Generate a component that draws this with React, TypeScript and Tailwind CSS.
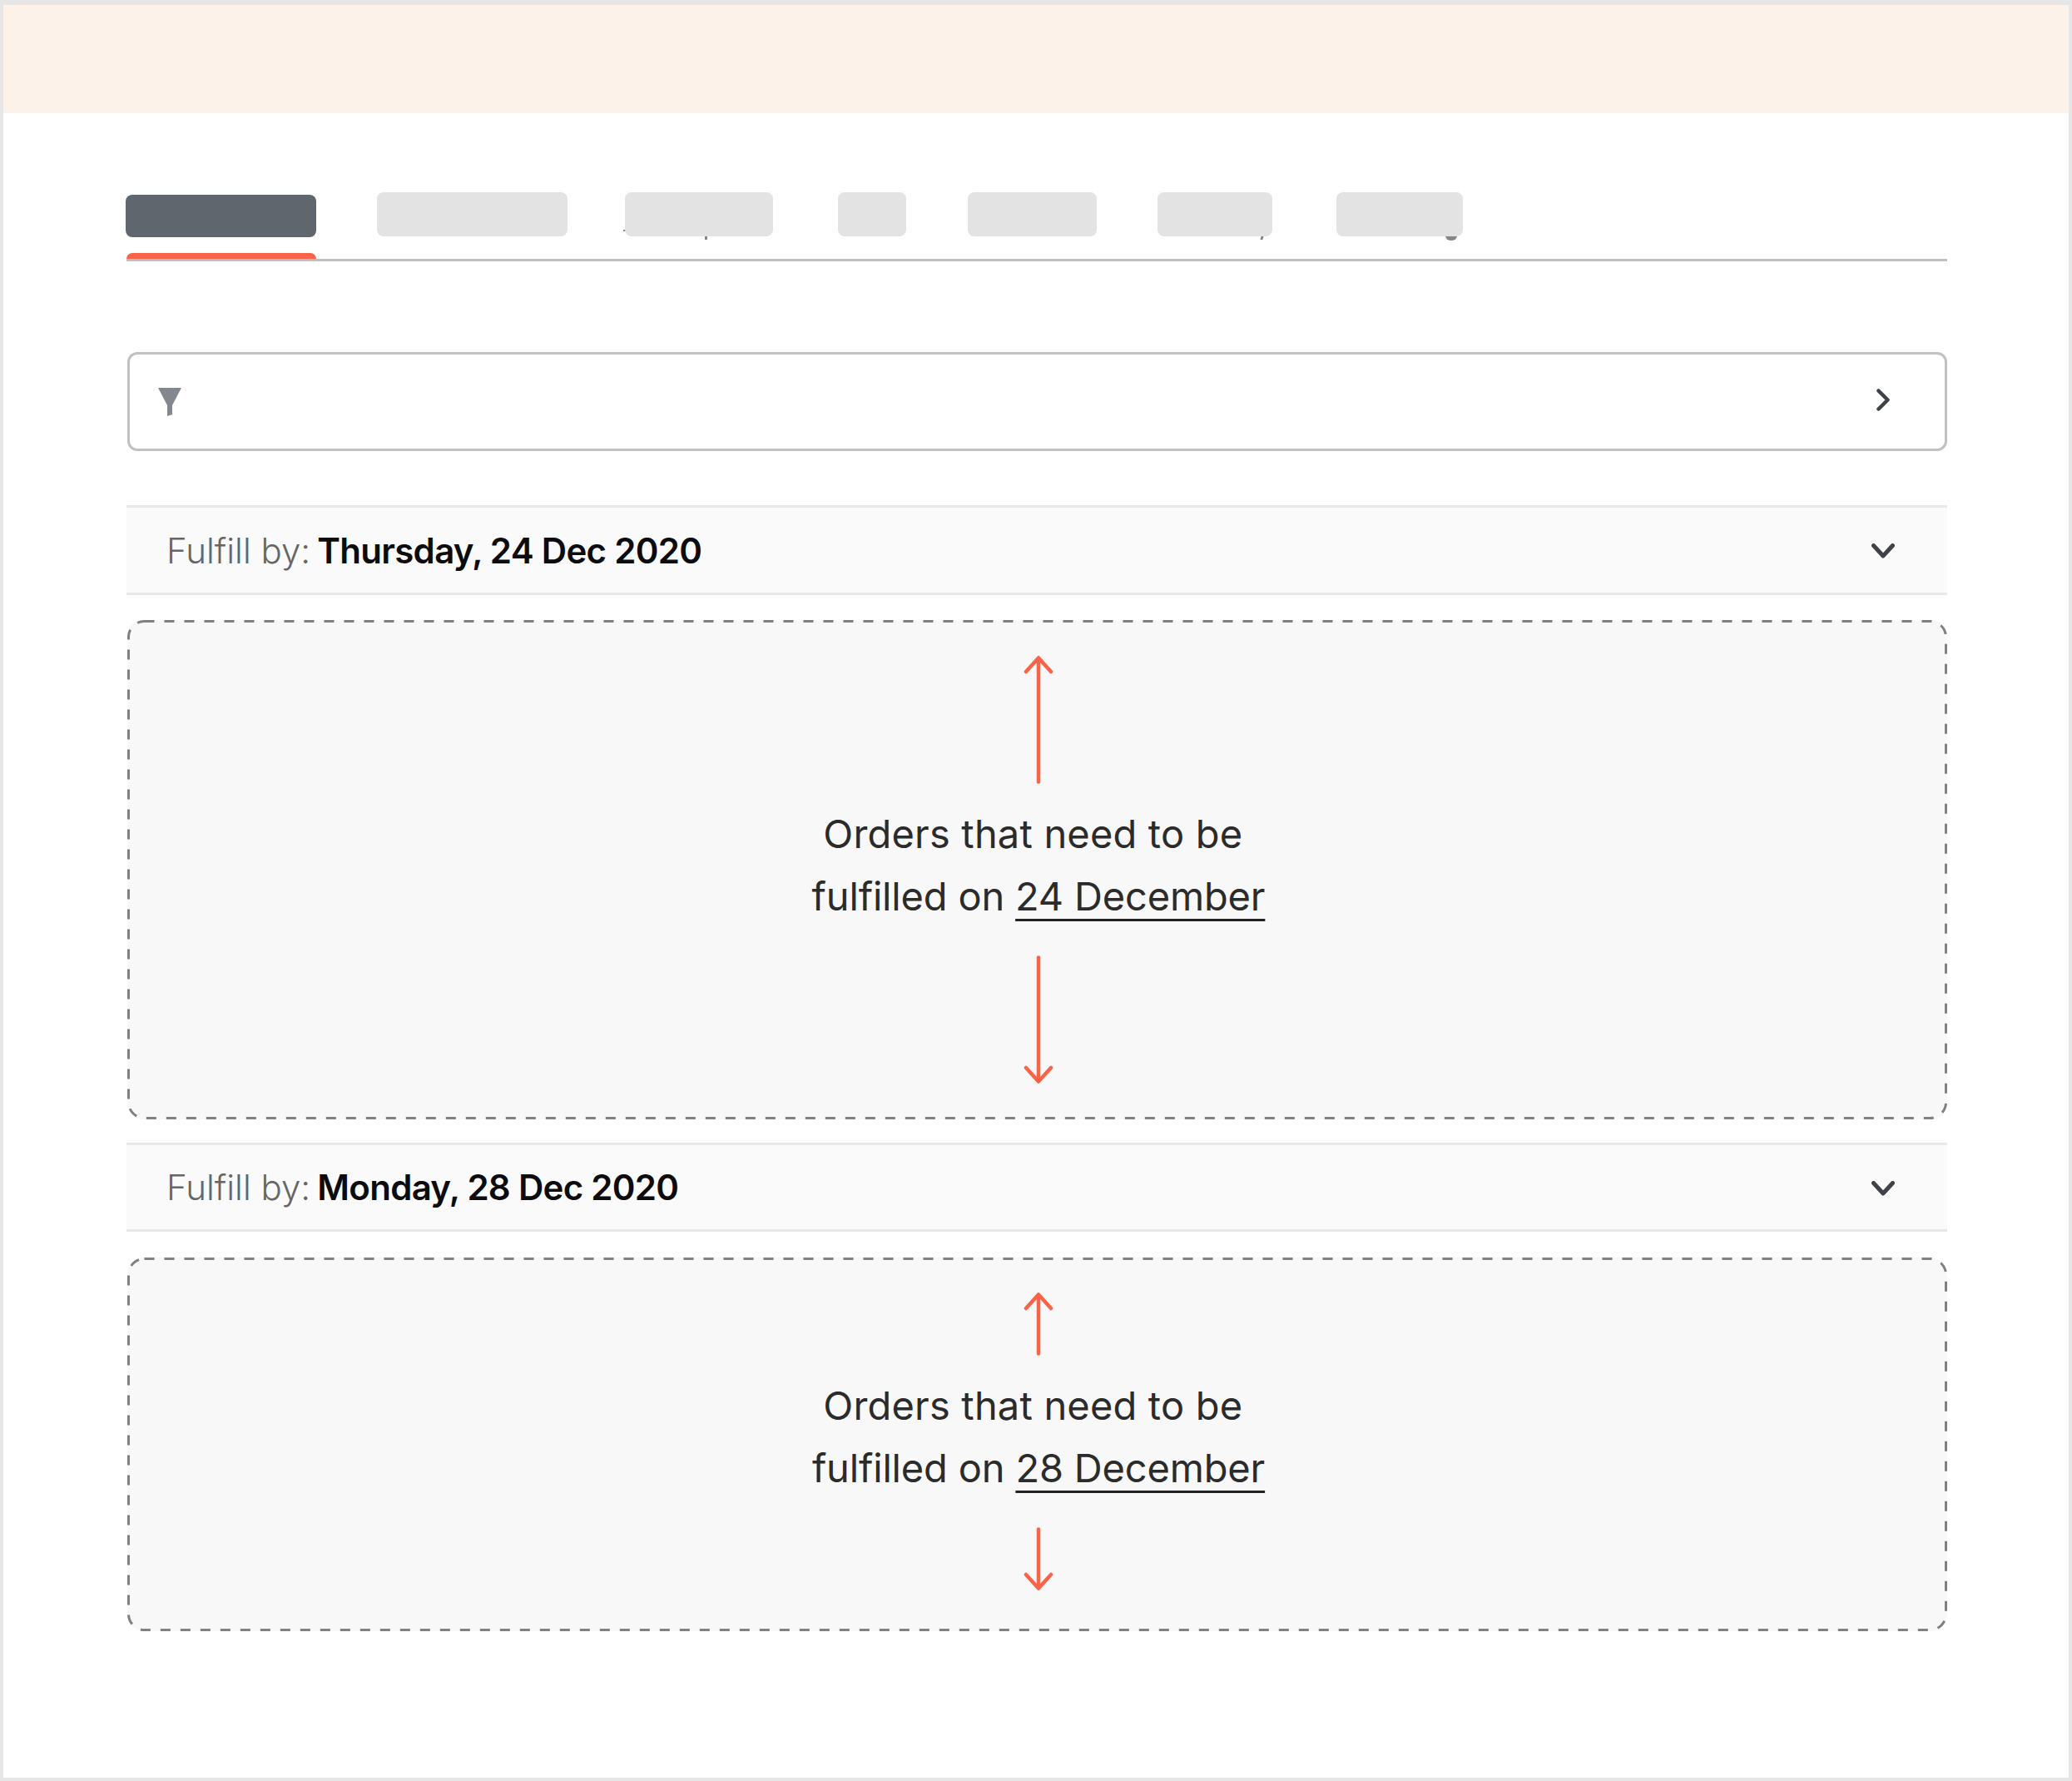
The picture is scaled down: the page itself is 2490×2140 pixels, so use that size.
import type { ReactNode } from 'react';

const tabs = [
  { id: 'a', className: 'ml-[73px] w-[229px]', mark: null },
  {
    id: 'b',
    className: 'ml-[69px] w-[178px]',
    mark: (
      <>
        <span className="absolute left-[-2px] top-[45px] h-[2px] w-[3px] bg-[#85878e]" />
        <span className="absolute left-[96px] top-[53px] h-[4px] w-[3px] bg-[#85878e]" />
      </>
    ),
  },
  { id: 'c', className: 'ml-[78px] w-[82px]', mark: null },
  { id: 'd', className: 'ml-[74px] w-[155px]', mark: null },
  {
    id: 'e',
    className: 'ml-[73px] w-[138px]',
    mark: <span className="absolute left-[124px] top-[53px] h-[4px] w-[3px] skew-x-[-15deg] bg-[#85878e]" />,
  },
  {
    id: 'f',
    className: 'ml-[77px] w-[152px]',
    mark: <span className="absolute left-[131px] top-[52px] h-[6px] w-[14px] rounded-b-full bg-[#85878e]" />,
  },
];

function ArrowUp({ height }: { height: number }) {
  return (
    <svg width="36" height={height} viewBox={`0 0 36 ${height}`} fill="none" stroke="#f96347" strokeWidth="4.5" strokeLinecap="round" strokeLinejoin="round">
      <path d={`M18 2.5V${height - 2.5}M3 19L18 2.5L33 19`} />
    </svg>
  );
}

function ArrowDown({ height }: { height: number }) {
  return (
    <svg width="36" height={height} viewBox={`0 0 36 ${height}`} fill="none" stroke="#f96347" strokeWidth="4.5" strokeLinecap="round" strokeLinejoin="round">
      <path d={`M18 2.5V${height - 2.5}M3 ${height - 19}L18 ${height - 2.5}L33 ${height - 19}`} />
    </svg>
  );
}

function ChevronDown() {
  return (
    <svg className="mt-[2px]" width="28" height="18" viewBox="0 0 28 18" fill="none" stroke="#3f4249" strokeWidth="5" strokeLinecap="round" strokeLinejoin="round">
      <path d="M2.5 2.5L14 15L25.5 2.5" />
    </svg>
  );
}

function GroupHeader({ day, className }: { day: string; className: string }) {
  return (
    <div className={`flex items-center justify-between border-y-[3px] border-[#e8e8e8] bg-[#fafafa] pl-12 pr-[63px] ${className}`}>
      <p className="text-[42px]">
        <span className="font-light text-[#666666]">Fulfill by:</span>
        <span className="ml-2 font-semibold tracking-[-0.7px] text-[#0c0c0e]">{day}</span>
      </p>
      <ChevronDown />
    </div>
  );
}

function DropZone({ date, arrow, className }: { date: string; arrow: number; className: string }) {
  return (
    <div className={`relative ml-px flex flex-col items-center rounded-[20px] bg-[#f8f8f8] pl-[3px] ${className}`}>
      <svg className="absolute inset-0 h-full w-full" fill="none">
        <rect x="1.5" y="1.5" rx="19" className="h-[calc(100%-3px)] w-[calc(100%-3px)]" stroke="#808080" strokeWidth="3" strokeDasharray="12 12" />
      </svg>
      <ArrowUp height={arrow} />
      <div className="mt-[22px] mb-[34px] text-center text-[47px] leading-[75px] text-[#2b2b2b]">
        <p className="tracking-[0.18px]">Orders that need to be&nbsp;</p>
        <p className="tracking-[-0.17px]">
          fulfilled on{' '}
          <span className="underline decoration-[#232323] decoration-[3px] underline-offset-[10px] [text-decoration-skip-ink:none]">{date}</span>
        </p>
      </div>
      <ArrowDown height={arrow} />
    </div>
  );
}

export default function App() {
  return (
    <div className="h-[2140px] w-[2490px] border-t-[6px] border-r-4 border-b-4 border-l-[4px] border-[#e6e6e6] bg-white font-['Inter',sans-serif]">
      <div className="h-[130px] bg-[#fcf2e9]" />

      <div className="pr-[146px] pl-[148px]">
        {/* Tabs, labels are blanked out in the picture */}
        <nav className="relative mt-[95px] flex h-[83px] items-start border-b-[3px] border-[#bdbdc2]">
          <div className="-ml-px mt-[3px] h-[51px] w-[229px] rounded-lg bg-[#5f666d]" />
          <div className="absolute bottom-0 left-0 h-[7px] w-[228px] rounded-t-lg bg-[#f96347]" />
          {tabs.map((tab): ReactNode => (
            <div key={tab.id} className={`relative h-[53px] ${tab.className}`}>
              {tab.mark}
              <div className="absolute inset-0 rounded-lg bg-[#e3e3e3]" />
            </div>
          ))}
        </nav>

        {/* Filter bar */}
        <div className="mt-[109px] ml-px flex h-[119px] items-center justify-between rounded-xl border-[3px] border-[#c0c1c5] pr-[66px] pl-[34px]">
          <svg width="28" height="34" viewBox="0 0 28 34" fill="#84878d">
            <path d="M0 0H28L17 21V32L11 34V21Z" />
          </svg>
          <svg className="mb-[5px]" width="16" height="27" viewBox="0 0 16 27" fill="none" stroke="#3f4249" strokeWidth="4.5" strokeLinecap="round" strokeLinejoin="round">
            <path d="M2.5 2.5L13.5 13.5L2.5 24.5" />
          </svg>
        </div>

        <GroupHeader day="Thursday, 24 Dec 2020" className="mt-[65px] h-[108px]" />
        <DropZone date="24 December" arrow={154} className="mt-[30px] h-[600px] pt-[43px]" />

        <GroupHeader day="Monday, 28 Dec 2020" className="mt-[28px] h-[107px]" />
        <DropZone date="28 December" arrow={76} className="mt-[31px] h-[449px] pt-[42px]" />
      </div>
    </div>
  );
}
